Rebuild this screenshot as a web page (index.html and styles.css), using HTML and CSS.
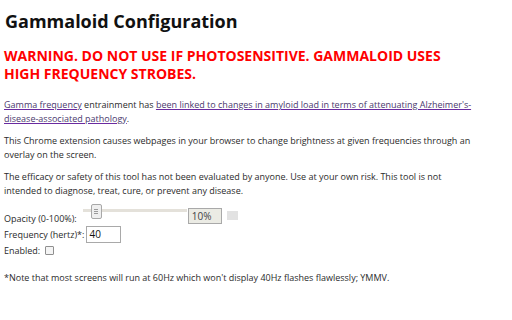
FILE: index.html
```html
<!DOCTYPE html>
<html>
<head>
<meta charset="utf-8">
<link rel="stylesheet" href="styles.css">
</head>
<body>
<div class="page">
  <h1 class="title">Gammaloid Configuration</h1>
  <h2 class="warning">WARNING. DO NOT USE IF PHOTOSENSITIVE. GAMMALOID USES HIGH FREQUENCY STROBES.</h2>
  <p class="text"><a class="link" href="#">Gamma frequency</a> entrainment has <a class="link" href="#">been linked to changes in amyloid load in terms of attenuating Alzheimer's-disease-associated pathology</a>.</p>
  <p class="text">This Chrome extension causes webpages in your browser to change brightness at given frequencies through an overlay on the screen.</p>
  <p class="text">The efficacy or safety of this tool has not been evaluated by anyone. Use at your own risk. This tool is not intended to diagnose, treat, cure, or prevent any disease.</p>
  <div class="form">
    <div class="row row-opacity">
      <span class="label">Opacity (0-100%):</span>
      <span class="slider"><span class="track"></span><span class="thumb"><span class="grip"></span><span class="grip"></span><span class="grip"></span></span></span>
      <span class="readout">10%</span>
      <span class="swatch"></span>
    </div>
    <div class="row row-freq">
      <span class="label">Frequency (hertz)*:</span>
      <span class="field">40</span>
    </div>
    <div class="row row-enabled">
      <span class="label">Enabled:</span>
      <span class="check"></span>
    </div>
  </div>
  <p class="text note">*Note that most screens will run at 60Hz which won't display 40Hz flashes flawlessly; YMMV.</p>
</div>
</body>
</html>
```
FILE: styles.css
```css
html, body {
  margin: 0;
  padding: 0;
  background: #ffffff;
}
.page {
  width: 470px;
  padding: 0 4px;
  font-family: "Open Sans", "Noto Sans", sans-serif;
  color: #2b2b2b;
}
.title {
  margin: 9px 0 0 1px;
  font-size: 18px;
  line-height: 24px;
  font-weight: 700;
  color: #111111;
}
.warning {
  margin: 14px 0 0 0;
  font-size: 14px;
  line-height: 18px;
  font-weight: 700;
  color: #ff0000;
  width: 470px;
}
.text {
  margin: 15px 0 0 0;
  font-size: 9px;
  line-height: 13.5px;
}
.text + .text {
  margin-top: 9px;
}
.link {
  color: #4a3a6e;
  text-decoration: underline;
  text-decoration-color: #6a2aa0;
}
.form {
  margin-top: 14px;
  font-size: 9px;
  display: flex;
  flex-direction: column;
}
.row {
  display: flex;
  align-items: center;
  height: 15px;
}
.row-freq {
  height: 17px;
}
.label {
  white-space: nowrap;
}
.slider {
  position: relative;
  align-self: flex-start;
  width: 104px;
  height: 15px;
  margin: -7px 0 0 6px;
}
.track {
  position: absolute;
  left: 0;
  right: 0;
  top: 5px;
  height: 3px;
  background: #e4e1da;
}
.thumb {
  position: absolute;
  left: 8px;
  top: 0;
  box-sizing: border-box;
  width: 11px;
  height: 15px;
  border: 1px solid #a8a8a8;
  border-radius: 2px;
  background: #efefef;
  display: flex;
  flex-direction: column;
  align-items: center;
  justify-content: center;
  gap: 1px;
}
.grip {
  display: block;
  width: 4px;
  height: 1px;
  background: #9a9a9a;
}
.readout {
  box-sizing: border-box;
  align-self: flex-start;
  width: 34px;
  height: 16px;
  margin: -3px 0 0 1px;
  border: 1px solid #a9a9a9;
  background: #ebebe4;
  padding-left: 3px;
  font-size: 10px;
  line-height: 14px;
  color: #444;
}
.swatch {
  align-self: flex-start;
  width: 11px;
  height: 9px;
  margin: 0 0 0 5px;
  background: #e2e2e2;
}
.field {
  box-sizing: border-box;
  width: 35px;
  height: 17px;
  margin-left: 2px;
  border: 1px solid #a9a9a9;
  background: #ffffff;
  padding-left: 2px;
  font-size: 10px;
  line-height: 15px;
  color: #111;
}
.check {
  box-sizing: border-box;
  width: 9px;
  height: 9px;
  margin-left: 5px;
  border: 1px solid #8f8f8f;
  border-radius: 1px;
  background: #f4f4f4;
}
.note {
  margin-top: 13px;
}
```
